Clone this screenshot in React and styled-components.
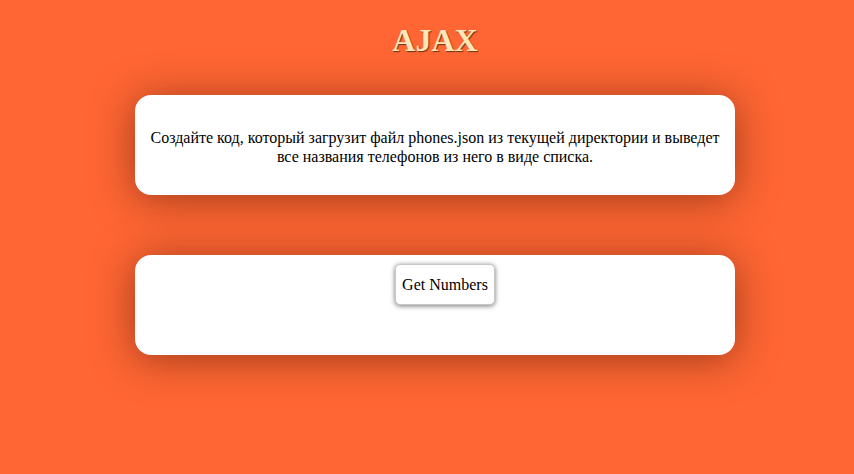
import styled, { createGlobalStyle } from "styled-components";

const GlobalStyle = createGlobalStyle`
  html, body {
    margin: 0;
    padding: 0;
    background: #ff6633;
    font-family: "Liberation Serif", "Times New Roman", serif;
    color: #000;
  }
`;

const Page = styled.div`
  min-height: 474px;
  box-sizing: border-box;
  display: flex;
  flex-direction: column;
  align-items: center;
  padding-top: 22px;
  padding-left: 16px;
`;

const Title = styled.h1`
  margin: 0;
  font-size: 32px;
  font-weight: 700;
  line-height: 37px;
  color: #ffe6b8;
  text-shadow: 1px 1px 1px #6b3418;
`;

const Card = styled.div`
  box-sizing: border-box;
  width: 600px;
  height: 100px;
  margin-top: ${(p) => p.$top}px;
  padding-top: ${(p) => p.$pad}px;
  background: #fff;
  border-radius: 16px;
  box-shadow: 0 4px 40px rgba(60, 20, 0, 0.5);
  display: flex;
  flex-direction: column;
  align-items: center;
`;

const Task = styled.p`
  margin: 0;
  padding: 0 10px;
  font-size: 16px;
  line-height: 19px;
  text-align: center;
`;

const Button = styled.button`
  margin-left: 20px;
  font-family: "Liberation Serif", "Times New Roman", serif;
  font-size: 16px;
  color: #000;
  background: #fff;
  border: 1px solid #c8c8c8;
  border-radius: 5px;
  padding: 10px 6px;
  line-height: 19px;
  box-shadow: 0 1px 5px rgba(0, 0, 0, 0.55);
  cursor: pointer;
`;

export default function App() {
  return (
    <>
      <GlobalStyle />
      <Page>
        <Title>AJAX</Title>
        <Card $top={36} $pad={33}>
          <Task>
            Создайте код, который загрузит файл phones.json из текущей директории и выведет
            <br />
            все названия телефонов из него в виде списка.
          </Task>
        </Card>
        <Card $top={60} $pad={9}>
          <Button>Get Numbers</Button>
        </Card>
      </Page>
    </>
  );
}
